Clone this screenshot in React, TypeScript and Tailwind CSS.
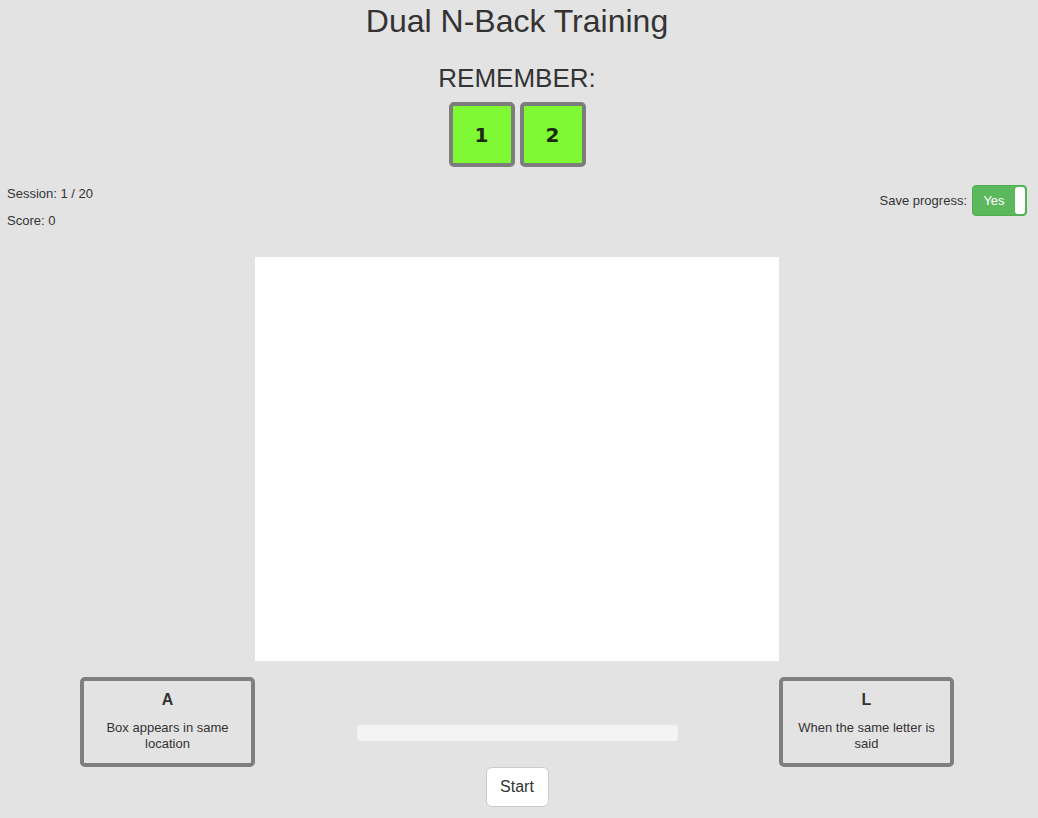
const App = () => {
  const remember = [1, 2];

  return (
    <div className="min-h-[818px] w-full bg-[#e3e3e3] text-[#333]" style={{ fontFamily: '"Liberation Sans", Arial, sans-serif' }}>
      <div className="flex w-[1034px] flex-col items-center px-[7px]">
        <h1 className="mt-[3px] text-[32px] leading-[36px]">Dual N-Back Training</h1>

        <h3 className="mt-[24px] text-[26px] leading-[30px]">REMEMBER:</h3>
        <div className="mt-[9px] flex gap-[5px]">
          {remember.map((n) => (
            <div
              key={n}
              className="flex h-[65px] w-[66px] items-center justify-center rounded-[5px] border-[4px] border-[#7d7d7d] bg-[#80f935] text-[20px] font-bold text-[#1c2a12]"
              style={{ fontFamily: '"DejaVu Sans", Verdana, sans-serif' }}
            >
              {n}
            </div>
          ))}
        </div>

        <div className="mt-[18px] flex w-full items-start justify-between">
          <div className="flex flex-col gap-[9px] text-[13px] leading-[18px]">
            <span>Session: 1 / 20</span>
            <span>Score: 0</span>
          </div>
          <div className="flex items-center gap-[5px] text-[13px]">
            <span>Save progress:</span>
            <div className="flex h-[31px] w-[55px] overflow-hidden rounded-[4px] border border-[#4cae4c] bg-[#5cb85c]">
              <span className="flex flex-1 items-center justify-center text-[13px] text-white">Yes</span>
              <span className="my-[1px] mr-[1px] w-[10px] rounded-[3px] bg-white" />
            </div>
          </div>
        </div>

        <div className="mt-[27px] h-[404px] w-[524px] bg-white" />

        <div className="mt-[16px] grid grid-cols-[175px_524px_175px]">
          <div className="flex h-[90px] flex-col items-center rounded-[5px] border-[4px] border-[#7f7f7f] px-[12px] pt-[10px] text-center">
            <span className="text-[16px] font-bold leading-[18px]">A</span>
            <span className="mt-[11px] text-[13px] leading-[16px]">Box appears in same location</span>
          </div>
          <div className="flex flex-col items-center">
            <div className="mt-[47px] h-[17px] w-[321px] rounded-[4px] bg-[#f4f4f4] shadow-[inset_0_1px_2px_rgba(0,0,0,0.06)]" />
          </div>
          <div className="flex h-[90px] flex-col items-center rounded-[5px] border-[4px] border-[#7f7f7f] px-[12px] pt-[10px] text-center">
            <span className="text-[16px] font-bold leading-[18px]">L</span>
            <span className="mt-[11px] text-[13px] leading-[16px]">When the same letter is said</span>
          </div>
        </div>

        <button className="h-[40px] w-[63px] rounded-[6px] border border-[#ccc] bg-white text-[16px] text-[#333]">
          Start
        </button>
      </div>
    </div>
  );
};

export default App;
